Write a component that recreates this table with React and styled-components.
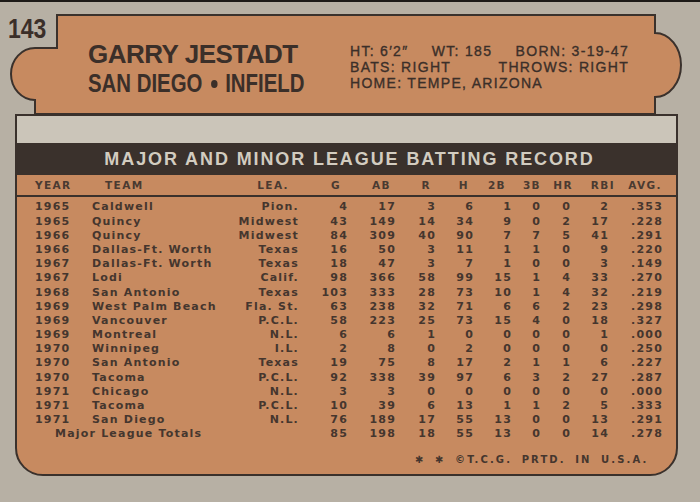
import React from "react";
import styled, { createGlobalStyle } from "styled-components";

const C = {
  card: "#b7b0a4",
  band: "#cbc5b9",
  orange: "#c78a60",
  dark: "#3a312c",
  ink: "#3b2f29",
  light: "#d2ccc0",
};

const GlobalStyle = createGlobalStyle`
  html, body { margin: 0; padding: 0; background: ${C.card}; }
  #root { width: 700px; height: 502px; }
`;

const Card = styled.div`
  width: 700px;
  height: 502px;
  box-sizing: border-box;
  background: ${C.card};
  border-top: 2px solid #1d1a17;
  display: flex;
  flex-direction: column;
  overflow: hidden;
  color: ${C.ink};
`;

const HeaderArea = styled.div`
  position: relative;
  height: 112px;
  flex: none;
  display: grid;
  grid-template-columns: 88px 262px 1fr;
`;

const PanelShape = styled.svg`
  position: absolute;
  left: 0;
  top: 0;
  width: 700px;
  height: 112px;
  overflow: visible;
  z-index: 0;
`;

const Layer = styled.div`
  position: relative;
  z-index: 1;
`;

const CardNumber = styled(Layer)`
  padding: 12.8px 0 0 8px;
  font-family: "Liberation Sans", Arial, sans-serif;
  font-weight: 700;
  font-size: 28px;
  line-height: 28px;
  span {
    display: inline-block;
    transform: scaleX(0.82);
    transform-origin: left center;
  }
`;

const NameBlock = styled(Layer)`
  padding-top: 37.7px;
  font-family: "Liberation Sans", Arial, sans-serif;
  font-weight: 700;
  white-space: nowrap;
`;

const PlayerName = styled.div`
  font-size: 26px;
  line-height: 29px;
  letter-spacing: -0.5px;
`;

const Position = styled.div`
  font-size: 25px;
  line-height: 29px;
  span {
    display: inline-block;
    transform: scaleX(0.815);
    transform-origin: left center;
  }
`;

const Dot = styled.i`
  display: inline-block;
  width: 8px;
  height: 8px;
  border-radius: 50%;
  background: ${C.ink};
  margin: 0 9px 0 11px;
  vertical-align: 4px;
`;

const InfoBlock = styled(Layer)`
  padding-top: 42.3px;
  width: 279px;
  font-family: "Liberation Sans", Arial, sans-serif;
  font-weight: 400;
  font-size: 14px;
  line-height: 15.7px;
  letter-spacing: 1.3px;
  -webkit-text-stroke: 0.35px ${C.ink};
  white-space: nowrap;
`;

const InfoLine = styled.div`
  display: flex;
  justify-content: ${(p) => (p.$spread ? "space-between" : "flex-start")};
`;

const TableBox = styled.div`
  margin-left: 15px;
  width: 663px;
  height: 362px;
  flex: none;
  box-sizing: border-box;
  border: 2px solid ${C.dark};
  border-radius: 0 0 28px 28px;
  background: ${C.orange};
  display: flex;
  flex-direction: column;
  overflow: hidden;
`;

const GreyBand = styled.div`
  height: 27px;
  background: ${C.band};
  flex: none;
`;

const TitleBand = styled.div`
  height: 32px;
  flex: none;
  background: ${C.dark};
  color: ${C.light};
  font-family: "Liberation Sans", Arial, sans-serif;
  font-weight: 700;
  font-size: 18px;
  line-height: 32px;
  letter-spacing: 1.9px;
  text-align: center;
  padding-left: 6px;
  white-space: nowrap;
`;

const cols = "57px 141px 66px 49px 48px 40px 38px 38px 29px 30px 38px 54px";

const HeadRow = styled.div`
  display: grid;
  grid-template-columns: ${cols};
  padding-left: 18px;
  height: 20px;
  border-bottom: 2px solid ${C.dark};
  font-family: "DejaVu Sans", Verdana, sans-serif;
  font-weight: 700;
  font-size: 10.5px;
  line-height: 20px;
  letter-spacing: 1.4px;
  color: #4a3a31;
  flex: none;
`;

const HeadCell = styled.div`
  white-space: nowrap;
  text-align: ${(p) => (p.$left ? "left" : "right")};
  padding-left: ${(p) => p.$pl || 0}px;
  margin-right: ${(p) => p.$mr || 0}px;
`;

const Rows = styled.div`
  padding-top: 3.4px;
  font-family: "DejaVu Sans", Verdana, sans-serif;
  font-weight: 700;
  font-size: 11px;
  line-height: 14.2px;
  letter-spacing: 1.2px;
  color: #45362e;
`;

const Row = styled.div`
  display: grid;
  grid-template-columns: ${cols};
  padding-left: 18px;
  height: 14.2px;
  white-space: nowrap;
`;

const Cell = styled.div`
  text-align: ${(p) => (p.$left ? "left" : "right")};
`;

const TotalLabel = styled.div`
  grid-column: 1 / span 3;
  padding-left: 20px;
  text-align: left;
`;

const Footer = styled.div`
  margin-top: 11px;
  padding-left: 398px;
  font-family: "DejaVu Sans", Verdana, sans-serif;
  font-weight: 700;
  font-size: 10px;
  line-height: 14px;
  letter-spacing: 2.1px;
  word-spacing: 4px;
  color: #45362e;
  white-space: nowrap;
`;

const headers = [
  { t: "YEAR", left: true },
  { t: "TEAM", left: true, pl: 13 },
  { t: "LEA.", mr: 10 },
  { t: "G", mr: 7 },
  { t: "AB", mr: 5 },
  { t: "R", mr: 5 },
  { t: "H", mr: 5 },
  { t: "2B", mr: 6 },
  { t: "3B", mr: 0 },
  { t: "HR", mr: -2 },
  { t: "RBI", mr: -6 },
  { t: "AVG.", mr: 1 },
];

const rows = [
  ["1965", "Caldwell", "Pion.", "4", "17", "3", "6", "1", "0", "0", "2", ".353"],
  ["1965", "Quincy", "Midwest", "43", "149", "14", "34", "9", "0", "2", "17", ".228"],
  ["1966", "Quincy", "Midwest", "84", "309", "40", "90", "7", "7", "5", "41", ".291"],
  ["1966", "Dallas-Ft. Worth", "Texas", "16", "50", "3", "11", "1", "1", "0", "9", ".220"],
  ["1967", "Dallas-Ft. Worth", "Texas", "18", "47", "3", "7", "1", "0", "0", "3", ".149"],
  ["1967", "Lodi", "Calif.", "98", "366", "58", "99", "15", "1", "4", "33", ".270"],
  ["1968", "San Antonio", "Texas", "103", "333", "28", "73", "10", "1", "4", "32", ".219"],
  ["1969", "West Palm Beach", "Fla. St.", "63", "238", "32", "71", "6", "6", "2", "23", ".298"],
  ["1969", "Vancouver", "P.C.L.", "58", "223", "25", "73", "15", "4", "0", "18", ".327"],
  ["1969", "Montreal", "N.L.", "6", "6", "1", "0", "0", "0", "0", "1", ".000"],
  ["1970", "Winnipeg", "I.L.", "2", "8", "0", "2", "0", "0", "0", "0", ".250"],
  ["1970", "San Antonio", "Texas", "19", "75", "8", "17", "2", "1", "1", "6", ".227"],
  ["1970", "Tacoma", "P.C.L.", "92", "338", "39", "97", "6", "3", "2", "27", ".287"],
  ["1971", "Chicago", "N.L.", "3", "3", "0", "0", "0", "0", "0", "0", ".000"],
  ["1971", "Tacoma", "P.C.L.", "10", "39", "6", "13", "1", "1", "2", "5", ".333"],
  ["1971", "San Diego", "N.L.", "76", "189", "17", "55", "13", "0", "0", "13", ".291"],
];

const totals = ["85", "198", "18", "55", "13", "0", "0", "14", ".278"];

export default function App() {
  return (
    <>
      <GlobalStyle />
      <Card>
        <HeaderArea>
          <PanelShape viewBox="0 0 700 112">
            <path
              d="M57 13 H655 V31 A26 32 0 0 1 655 95 V112 H35 V98 A24 26 0 0 1 35 46 H57 Z"
              fill={C.orange}
              stroke={C.dark}
              strokeWidth="2"
            />
          </PanelShape>
          <CardNumber>
            <span>143</span>
          </CardNumber>
          <NameBlock>
            <PlayerName>GARRY JESTADT</PlayerName>
            <Position>
              <span>
                SAN DIEGO<Dot />INFIELD
              </span>
            </Position>
          </NameBlock>
          <InfoBlock>
            <InfoLine $spread>
              <span>HT: 6′2″</span>
              <span>WT: 185</span>
              <span>BORN: 3-19-47</span>
            </InfoLine>
            <InfoLine $spread>
              <span>BATS: RIGHT</span>
              <span>THROWS: RIGHT</span>
            </InfoLine>
            <InfoLine>
              <span>HOME: TEMPE, ARIZONA</span>
            </InfoLine>
          </InfoBlock>
        </HeaderArea>
        <TableBox>
          <GreyBand />
          <TitleBand>MAJOR AND MINOR LEAGUE BATTING RECORD</TitleBand>
          <HeadRow>
            {headers.map((h) => (
              <HeadCell key={h.t} $left={h.left} $pl={h.pl} $mr={h.mr}>
                {h.t}
              </HeadCell>
            ))}
          </HeadRow>
          <Rows>
            {rows.map((r, i) => (
              <Row key={i}>
                {r.map((v, j) => (
                  <Cell key={j} $left={j < 2}>
                    {v}
                  </Cell>
                ))}
              </Row>
            ))}
            <Row>
              <TotalLabel>Major League Totals</TotalLabel>
              {totals.map((v, j) => (
                <Cell key={j}>{v}</Cell>
              ))}
            </Row>
          </Rows>
          <Footer>✱ ✱ ©T.C.G. PRTD. IN U.S.A.</Footer>
        </TableBox>
      </Card>
    </>
  );
}
